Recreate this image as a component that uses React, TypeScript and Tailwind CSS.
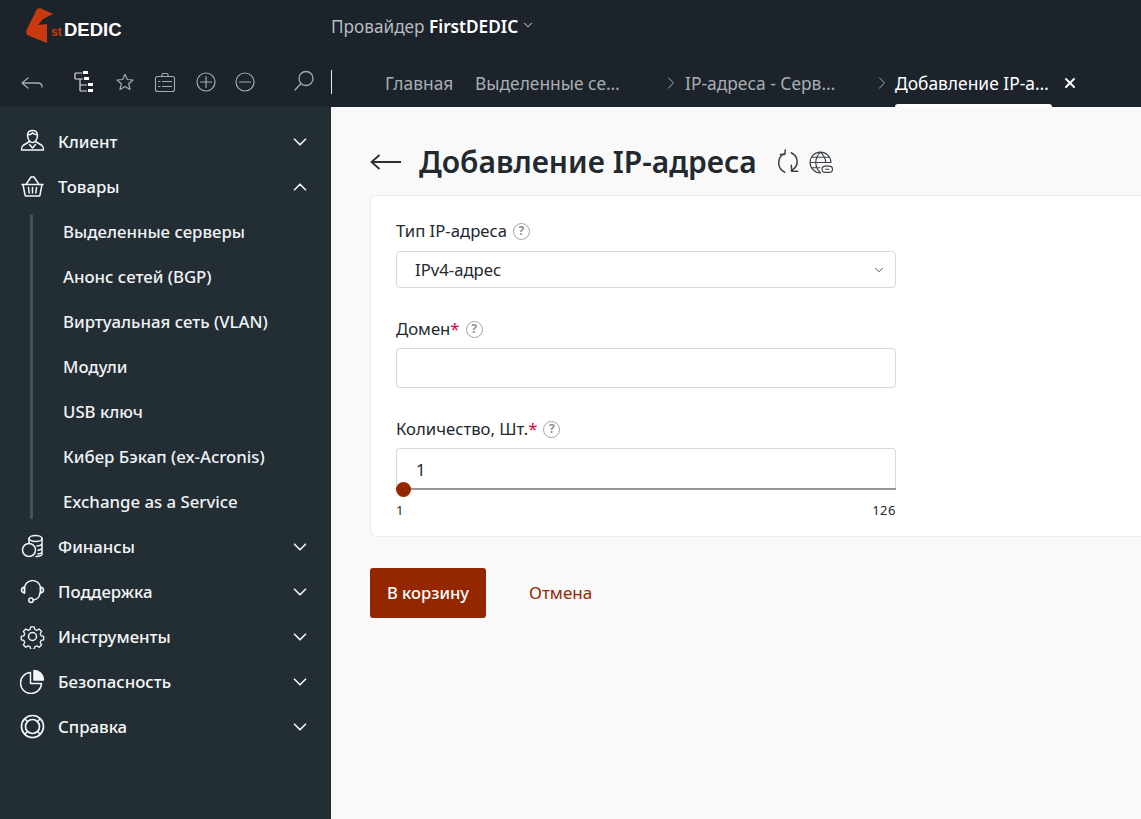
import { ChevronDown, ChevronUp, ChevronRight, X } from 'lucide-react'

const font = "font-['Noto_Sans','Open_Sans',sans-serif]"

const Icon = ({ children, size = 28, box = 24, color = 'currentColor', sw = 1.5 }: { children: React.ReactNode; size?: number; box?: number; color?: string; sw?: number }) => (
  <svg width={size} height={size} viewBox={`0 0 ${box} ${box}`} fill="none" stroke={color} strokeWidth={sw} strokeLinecap="round" strokeLinejoin="round">
    {children}
  </svg>
)

const menuIcons: Record<string, React.ReactNode> = {
  client: (
    <>
      <path d="M7.500 6.500C7.500 3.500 9.500 1.500 12.500 1.500s5 2 5 5c0 3.500-2.500 7-5 7s-5-3.500-5-7Z" />
      <path d="M8 5.500c2 .5 3.500-.5 4.500-1.800 1 1.300 3 2 4.500 1.800" />
      <path d="M9.500 12.500 3 16.500c-1 .7-1.500 2-1.500 4.500h22c0-2.500-.5-3.800-1.500-4.500l-6.500-4" />
      <path d="M9.500 15.500 12.500 19l3-3.500" />
    </>
  ),
  goods: (
    <>
      <path d="M2 10.500h21" />
      <path d="M3 10.500 5 21c.1.500.5 1 1 1h13c.5 0 .9-.5 1-1l2-10.500" />
      <path d="M6 10.500 11 3M19 10.500 14 3M11 3h3" />
      <path d="M8.500 13.500 9.200 19M12.500 13.500V19M16.500 13.500 15.800 19" />
    </>
  ),
  finance: (
    <>
      <ellipse cx="15.500" cy="4.500" rx="6.500" ry="3" />
      <path d="M9 4.500v5M22 4.500V20c0 1.200-2 2.300-6 2.500M22 9.500c0 1.200-2 2.200-5 2.500M22 14c0 1-1.500 1.800-4 2.200M22 18c0 1-1.500 1.700-4 2" />
      <circle cx="9" cy="16" r="6.500" />
    </>
  ),
  support: (
    <>
      <path d="M4.500 14V9.500a8 8 0 0 1 16 0V14" />
      <path d="M4.500 8C2.500 8.300 1.500 9.500 1.500 11s1 2.700 3 3V8ZM20.500 8c2 .3 3 1.500 3 3s-1 2.700-3 3V8Z" />
      <path d="M20 14c-.5 4-3 6.500-6.500 7" />
      <circle cx="11" cy="21.300" r="2.200" />
    </>
  ),
  tools: (
    <>
      <circle cx="12.500" cy="12.500" r="4" />
      <path d="M10.500 1.500h4l.7 3 2.300 1 2.700-1.600 2.800 2.800-1.600 2.700 1 2.300 3 .7v4l-3 .7-1 2.300 1.600 2.700-2.800 2.800-2.700-1.600-2.300 1-.7 3h-4l-.7-3-2.300-1-2.700 1.600-2.800-2.800 1.600-2.700-1-2.300-3-.7v-4l3-.7 1-2.300-1.600-2.700 2.800-2.800 2.700 1.600 2.300-1 .7-3Z" transform="translate(1.600 1.600) scale(.87)" />
    </>
  ),
  security: (
    <>
      <path d="M10.500 3.500a10.500 10.500 0 1 0 11 11h-11v-11Z" />
      <path d="M14 1.500a9.500 9.500 0 0 1 9.500 9.500H14V1.500Z" fill="currentColor" />
    </>
  ),
  help: (
    <>
      <circle cx="12.500" cy="12.500" r="11" strokeWidth="1.700" />
      <circle cx="12.500" cy="12.500" r="7" strokeWidth="1.700" />
      <path d="M5 5l2.500 2.500M20 5l-2.500 2.500M5 20l2.500-2.500M20 20l-2.500-2.500" />
    </>
  ),
}

const submenu = [
  'Выделенные серверы',
  'Анонс сетей (BGP)',
  'Виртуальная сеть (VLAN)',
  'Модули',
  'USB ключ',
  'Кибер Бэкап (ex-Acronis)',
  'Exchange as a Service',
]

function MenuRow({ icon, label, open }: { icon: string; label: string; open?: boolean }) {
  return (
    <div className="flex h-[45px] items-center pl-[20px] pr-[20px] text-[#f4f6f7]">
      <Icon box={25} size={25}>{menuIcons[icon]}</Icon>
      <span className="ml-[13px] flex-1 text-[16.800px] font-medium">{label}</span>
      {open ? <ChevronUp size={22} strokeWidth={1.800} /> : <ChevronDown size={22} strokeWidth={1.800} />}
    </div>
  )
}

function Help() {
  return (
    <span className="ml-[6px] inline-flex h-[17px] w-[17px] items-center justify-center rounded-full border-[1.500px] border-[#a3a3a3] text-[12px] font-bold leading-none text-[#8f8f8f]">
      ?
    </span>
  )
}

function TopBar() {
  return (
    <header className="h-[107px] shrink-0 bg-[#1c232b]">
      <div className="flex h-[58px]">
        <div className="relative w-[331px]">
          <svg className="absolute left-[25px] top-[7px]" width="30" height="37" viewBox="0 0 30 37">
            <path d="M12 2 15 1 28 7 18 12 13 18 22 17 22 36 2 28 1 24Z" fill="#c93a10" />
          </svg>
          <span className="absolute left-[51px] top-[24px] text-[12px] font-bold leading-[16px] text-[#c93a10] font-['Liberation_Sans',sans-serif]">st</span>
          <span className="absolute left-[64px] top-[19px] text-[18.500px] font-bold leading-[22px] text-white font-['Liberation_Sans',sans-serif]">DEDIC</span>
        </div>
        <div className="flex items-center pb-[5px] text-[17.200px] text-[#b6bcc1]">
          Провайдер&nbsp;
          <span className="font-semibold text-white">FirstDEDIC</span>
          <ChevronDown size={14} className="ml-[3px] mt-[-3px] text-white" strokeWidth={1.500} />
        </div>
      </div>
      <div className="flex h-[49px]">
        <div className="flex w-[331px] shrink-0 items-start pt-[13px] text-[#a4abb0]">
          <div className="ml-[20px] flex">
            <Icon box={25} size={25} sw={1.300}>
              <path d="M2 12h16c2.500 0 4 1.300 4 4M2 12l6-5M2 12l6 5" />
            </Icon>
          </div>
          <div className="ml-[28px] mt-[-1px] text-[#d9dcde]">
            <svg width="24" height="26" viewBox="0 0 24 26" fill="none" stroke="currentColor" strokeWidth="1.200">
              <path d="M2 3h7M2 3v6M2 9h8M7 9v12M7 15h7M7 21h7" />
              <rect x="10" y="1" width="5" height="3" fill="#fff" stroke="none" />
              <rect x="11" y="7" width="5" height="3" fill="#fff" stroke="none" />
              <rect x="15" y="13" width="5" height="3" fill="#fff" stroke="none" />
              <rect x="15" y="19" width="5" height="3" fill="#fff" stroke="none" />
            </svg>
          </div>
          <div className="ml-[18px] mt-[1px]">
            <Icon size={20} box={20} sw={1.200}>
              <path d="M10 2.200 12.300 7.500l5.700.5-4.300 3.800 1.300 5.600L10 14.500l-5 2.900 1.300-5.600L2 8l5.700-.5L10 2.200Z" />
            </Icon>
          </div>
          <div className="ml-[18px] mt-[-1px]">
            <Icon size={24} box={24} sw={1.100}>
              <rect x="2.500" y="6.500" width="19" height="15" rx="2" />
              <path d="M9 6.500V4.500c0-.6.400-1 1-1h4c.6 0 1 .4 1 1v2M5.500 11.500h1.500M9.500 11.500h9M5.500 16.500h1.500M9.500 16.500h9" />
            </Icon>
          </div>
          <div className="ml-[17px] mt-[-1px]">
            <Icon size={24} box={24} sw={1.200}>
              <circle cx="12" cy="12" r="9" />
              <path d="M12 6.500v11M6.500 12h11" />
            </Icon>
          </div>
          <div className="ml-[15px] mt-[-1px]">
            <Icon size={24} box={24} sw={1.200}>
              <circle cx="12" cy="12" r="9" />
              <path d="M6.500 12h11" />
            </Icon>
          </div>
          <div className="ml-[35px] mt-[-2px]">
            <Icon size={24} box={24} sw={1.300}>
              <circle cx="14" cy="9.500" r="7" />
              <path d="M9 14.500 3 21" />
            </Icon>
          </div>
          <div className="ml-[15px] mt-[-1px] h-[24px] w-px shrink-0 bg-[#e8e8e8]" />
        </div>
        <nav className="flex flex-1 items-start whitespace-nowrap text-[17.400px] leading-[22px] text-[#a9aeb3]">
          <span className="ml-[54px] w-[90px] pt-[14px]">Главная</span>
          <span className="w-[186px] pt-[14px]">Выделенные се…</span>
          <ChevronRight size={20} strokeWidth={1.200} className="mt-[15px]" />
          <span className="ml-[4px] w-[187px] pt-[14px]">IP-адреса - Серв…</span>
          <ChevronRight size={20} strokeWidth={1.200} className="mt-[15px]" />
          <span className="relative ml-[3px] h-[49px] w-[157px] pt-[14px] text-white">
            Добавление IP-а…
            <span className="absolute bottom-0 left-0 right-0 h-[3px] rounded-t-sm bg-white" />
          </span>
          <X size={16} strokeWidth={3} className="ml-[10px] mt-[17px] text-white" />
        </nav>
      </div>
    </header>
  )
}

function Sidebar() {
  return (
    <aside className="w-[331px] shrink-0 bg-[#232d34] pt-[12px]">
      <MenuRow icon="client" label="Клиент" />
      <MenuRow icon="goods" label="Товары" open />
      <div className="relative ml-[30px]">
        <div className="absolute bottom-[5px] left-0 top-[5px] w-[3px] rounded bg-[#46525a]" />
        {submenu.map((item) => (
          <div key={item} className="flex h-[45px] items-center pl-[33px] text-[16.800px] font-medium text-[#f1f3f4]">
            {item}
          </div>
        ))}
      </div>
      <MenuRow icon="finance" label="Финансы" />
      <MenuRow icon="support" label="Поддержка" />
      <MenuRow icon="tools" label="Инструменты" />
      <MenuRow icon="security" label="Безопасность" />
      <MenuRow icon="help" label="Справка" />
    </aside>
  )
}

function Form() {
  return (
    <main className="min-w-0 flex-1 bg-[#f9f9f9] pl-[39px] pt-[34px]">
      <div className="flex h-[42px] items-center">
        <svg width="32" height="20" viewBox="0 0 32 20" fill="none" stroke="#2b2f33" strokeWidth="1.800">
          <path d="M1 10h30M9.500 3 1.500 10l8 7" />
        </svg>
        <h1 className="ml-[17px] text-[30px] font-semibold leading-[42px] text-[#22292f]">Добавление IP-адреса</h1>
        <div className="ml-[18px] text-[#3a4046]">
          <Icon size={26} box={24} sw={1.400}>
            <path d="M8 4.500C2 8 1.500 18 9 21.500M9.500 1 9 5 5 5M15 3.500C22 7 22.500 16 15 20M15 15l.5 5.500 5.500 0" />
          </Icon>
        </div>
        <div className="ml-[7px] text-[#3a4046]">
          <Icon size={25} box={24} sw={1.100}>
            <path d="M22 12a10 10 0 1 0-10 10M2 12h20M12 2c-6 5.500-6 14.500 0 20M12 2c3.500 3.500 5 6.500 5 10M3.500 7h17M3.500 17h8" />
            <rect x="13.500" y="15.500" width="10" height="6" rx="3" fill="#f9f9f9" />
            <path d="M17 18.500h3" />
          </Icon>
        </div>
      </div>

      <section className="mt-[12px] h-[342px] rounded-l-[6px] border border-r-0 border-[#ececec] bg-white pl-[25px] pt-[23px] text-[#22292f]">
        <div className="w-[500px]">
          <label className="flex h-[24px] items-center text-[16.700px]">
            Тип IP-адреса
            <Help />
          </label>
          <div className="mt-[8px] flex h-[37px] items-center justify-between rounded-[4px] border border-[#d9d9d9] pl-[18px] pr-[9px] text-[16.700px]">
            IPv4-адрес
            <ChevronDown size={14} strokeWidth={1.500} className="text-[#3a4046]" />
          </div>

          <label className="mt-[29px] flex h-[24px] items-center text-[16.700px]">
            Домен<span className="text-[#e0003c]">*</span>
            <Help />
          </label>
          <div className="mt-[7px] h-[40px] rounded-[4px] border border-[#d9d9d9]" />

          <label className="mt-[29px] flex h-[24px] items-center text-[16.700px]">
            Количество, Шт.<span className="text-[#e0003c]">*</span>
            <Help />
          </label>
          <div className="relative mt-[7px] h-[42px] rounded-t-[4px] border border-b-0 border-[#d9d9d9] pl-[19px] pt-[8px] text-[16.700px]">
            1
            <div className="absolute -left-px -right-px bottom-0 h-[2px] bg-[#979797]" />
            <div className="absolute bottom-[-7px] left-[-1px] h-[15px] w-[15px] rounded-full bg-[#952700]" />
          </div>
          <div className="mt-[12px] flex justify-between text-[13px] leading-[16px] tracking-[0.5px]">
            <span>1</span>
            <span>126</span>
          </div>
        </div>
      </section>

      <div className="mt-[31px] flex items-center">
        <button className="h-[50px] w-[116px] rounded-[3px] bg-[#952700] text-[16.600px] font-medium text-white">В корзину</button>
        <button className="ml-[43px] text-[17px] text-[#952700]">Отмена</button>
      </div>
    </main>
  )
}

export default function App() {
  return (
    <div className={`flex h-[819px] w-[1141px] flex-col overflow-hidden ${font}`}>
      <TopBar />
      <div className="flex min-h-0 flex-1">
        <Sidebar />
        <Form />
      </div>
    </div>
  )
}
